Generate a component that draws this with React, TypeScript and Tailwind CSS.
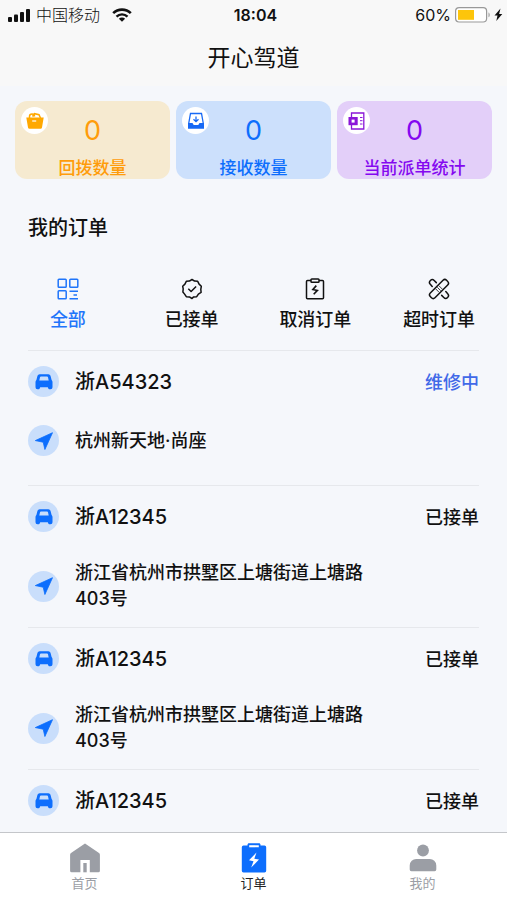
import type React from "react"
import { useState } from "react"

interface Stat {
  label: string
  value: number
  className: string
  icon: React.ReactNode
}

interface Order {
  id: number
  plate: string
  status: string
  repairing?: boolean
  address?: string
}

const SignalIcon = () => (
  <svg viewBox="0 0 24 14" className="w-6 h-[14px]" fill="#111">
    <rect x="0" y="9" width="4" height="5" rx="1" />
    <rect x="6" y="6.500" width="4" height="7.500" rx="1" />
    <rect x="12" y="4" width="4" height="10" rx="1" />
    <rect x="18" y="1" width="4" height="13" rx="1" />
  </svg>
)

const WifiIcon = () => (
  <svg viewBox="0 0 20 14" className="w-5 h-[14px]" fill="none" stroke="#111">
    <path d="M1.200 5.200a12.500 12.500 0 0 1 17.600 0" strokeWidth="2.600" />
    <path d="M4.500 8.600a7.800 7.800 0 0 1 11 0" strokeWidth="2.400" />
    <path d="M10 13.800 6.900 10.800a4.400 4.400 0 0 1 6.200 0z" fill="#111" stroke="none" />
  </svg>
)

const BatteryIcon = () => (
  <svg viewBox="0 0 48 16" className="w-12 h-4">
    <rect x="0.600" y="0.600" width="31" height="14.400" rx="3.500" fill="#fff" stroke="#999" strokeWidth="1.200" />
    <rect x="3" y="3" width="16" height="9.800" fill="#fdc50b" />
    <path d="M33.500 5.500c1.600.6 1.600 4.200 0 4.800z" fill="#999" />
    <path d="M45.500 1.500 39.500 8.600h3L41.300 14l6-7h-3.200z" fill="#111" />
  </svg>
)

const BasketIcon = () => (
  <svg viewBox="0 0 18 18" className="w-[18px] h-[18px]">
    <path d="M3.500 6V4.500a2.500 2.500 0 0 1 5 0M6.500 4.500l2-2.800 4.500 1 1.500 3.300" fill="none" stroke="#ffa800" strokeWidth="1.500" />
    <path d="M0.300 5.500h17.400l-1.700 10a1.500 1.500 0 0 1-1.500 1.200h-11a1.500 1.500 0 0 1-1.500-1.200z" fill="#ffa800" />
    <path d="M6.200 9h4" stroke="#fff" strokeWidth="1.200" />
  </svg>
)

const InboxIcon = () => (
  <svg viewBox="0 0 18 18" className="w-[18px] h-[18px]" fill="none" stroke="#1769f5" strokeWidth="1.300">
    <path d="M1.700 11.500 3.500 1.500h11l1.800 10" />
    <path d="M1 11h4.500l1.200 2h4.600l1.200-2H17v5.800H1z" fill="#1769f5" stroke="none" />
    <path d="M9 4.500v5M6.500 7.300 9 9.700l2.500-2.400" />
  </svg>
)

const ReportIcon = () => (
  <svg viewBox="0 0 18 18" className="w-[18px] h-[18px]" fill="none" stroke="#8a16d8" strokeWidth="1.300">
    <path d="M3.500 5V1h12.300v16H3.500v-4" />
    <path d="M12 5.500h2.500M12 8.700h2.500M12 12h2.500" strokeWidth="1" />
    <rect x="0.500" y="5" width="9.200" height="8.200" fill="#8a16d8" stroke="none" />
    <rect x="3.600" y="7.600" width="3" height="3" fill="#fff" stroke="none" />
  </svg>
)

const GridIcon = () => (
  <svg viewBox="0 0 22 22" className="w-[22px] h-[22px]" fill="none" stroke="currentColor" strokeWidth="1.500">
    <rect x="1.200" y="1.200" width="8" height="8" rx="0.800" />
    <rect x="12.800" y="1.200" width="8" height="8" rx="0.800" />
    <rect x="1.200" y="12.800" width="8" height="8" rx="0.800" />
    <path d="M12.500 13.200h8.500M16.500 17h3.500M12.500 20.700h8.500" />
  </svg>
)

const BadgeIcon = () => (
  <svg viewBox="0 0 22 22" className="w-[22px] h-[22px]" fill="none" stroke="currentColor" strokeWidth="1.500" strokeLinejoin="round">
    <path d="M11 1.500l2.600 1.600 3.100.2 1.400 2.800 2.200 2.200-.5 3 .3 3.100-2.700 1.700-1.700 2.600-3.100.2L11 20.500l-2.600-1.600-3.100-.2-1.700-2.600L1.900 14l.3-3.100-.5-2.600 2.200-2.200 1.400-2.800 3.100-.2z" />
    <path d="M7.300 10.800l2.800 2.700 5-5" />
  </svg>
)

const ClipboardIcon = () => (
  <svg viewBox="0 0 22 22" className="w-[22px] h-[22px]" fill="none" stroke="currentColor" strokeWidth="1.500">
    <path d="M7 2.500H3.500a1 1 0 0 0-1 1v16.300a1 1 0 0 0 1 1h15a1 1 0 0 0 1-1V3.500a1 1 0 0 0-1-1H15" />
    <rect x="7" y="1" width="8" height="3.300" rx="0.800" />
    <path d="M12.300 7.600 8.900 11.500l4.500.9-3.700 3.900" strokeWidth="1.600" />
  </svg>
)

const BandageIcon = () => (
  <svg viewBox="0 0 22 22" className="w-[22px] h-[22px]" fill="none" stroke="currentColor" strokeWidth="1.500" strokeLinecap="round">
    <rect x="-0.500" y="7.700" width="23" height="6.600" rx="2.500" transform="rotate(-45 11 11)" />
    <path d="M4.200 8.400 2.300 6.300a2.700 2.700 0 0 1 .1-3.800 2.700 2.700 0 0 1 3.800 0L8.300 4.600" />
    <path d="M17.800 13.600l1.900 2.100a2.700 2.700 0 0 1-.1 3.800 2.700 2.700 0 0 1-3.800 0l-2.100-2.100" />
    <path d="M8 11.200l2.800 2.800M9.600 9.600l2.800 2.800M11.200 8l2.800 2.800" strokeWidth="0.800" />
  </svg>
)

const CarIcon = () => (
  <svg viewBox="0 0 18 16" className="w-[18px] h-4">
    <path
      d="M4.600.2h8.800a2.200 2.200 0 0 1 2.100 1.600L16.600 6c.6.500.9 1.200.9 2v5.300a2 2 0 0 1-2 2h-.7c-.9 0-1.500-.6-1.700-1.400l-.3-.7H5.200l-.3.7c-.2.800-.8 1.400-1.700 1.400h-.7a2 2 0 0 1-2-2V8c0-.8.300-1.500.9-2l1.100-4.200A2.200 2.200 0 0 1 4.600.2z"
      fill="#0d6efd"
    />
    <path d="M6 2.500h6a1 1 0 0 1 1 .8l.7 3.300H4.300L5 3.300a1 1 0 0 1 1-.8z" fill="#c9defb" />
  </svg>
)

const ArrowIcon = () => (
  <svg viewBox="0 0 18 18" className="w-[18px] h-[18px]">
    <path d="M17.500.7 0.300 8.600l7.900 1.600 1.700 7.300z" fill="#0d6efd" stroke="#0d6efd" strokeWidth="0.800" strokeLinejoin="round" />
  </svg>
)

const HomeIcon = () => (
  <svg viewBox="0 0 30 30" className="w-[30px] h-[30px]" fill="currentColor">
    <path d="M15 .5 29 10c.6.400.9 1 .9 1.700v16.100a1.500 1.500 0 0 1-1.500 1.500h-8.600V17h-9.400v12.300H1.600A1.500 1.500 0 0 1 .1 27.800V11.700c0-.7.300-1.300.9-1.700z" />
    <path d="M13.300 20h3.400v9.300h-3.400z" />
  </svg>
)

const OrderIcon = () => (
  <svg viewBox="0 0 30 30" className="w-[30px] h-[30px]">
    <path d="M4.500 2.500h4V1.800C8.500.9 9.200.3 10 .3h10c.8 0 1.500.6 1.500 1.500v.7h4A1.700 1.700 0 0 1 27.200 4.200v23.500a1.700 1.700 0 0 1-1.700 1.700h-21a1.700 1.700 0 0 1-1.700-1.700V4.200A1.700 1.700 0 0 1 4.500 2.500z" fill="#0d6efd" />
    <path d="M10.200 2.200h9.600v2.100h-9.600z" fill="#fff" />
    <path d="M17.500 9.500 10 17.200l4.500 1-2.300 6.300 7.800-7.900-4.700-.9z" fill="#fff" />
  </svg>
)

const UserIcon = () => (
  <svg viewBox="0 0 30 30" className="w-[30px] h-[30px]" fill="currentColor">
    <circle cx="15" cy="7.500" r="5.900" />
    <path d="M8.500 16h13a6.500 6.500 0 0 1 6.800 6.500v4a1.700 1.700 0 0 1-1.700 1.700H3.400a1.700 1.700 0 0 1-1.700-1.700v-4A6.500 6.500 0 0 1 8.500 16z" />
  </svg>
)

const stats: Stat[] = [
  { label: "回拨数量", value: 0, className: "bg-[#f6ead0] text-[#ff9c0a]", icon: <BasketIcon /> },
  { label: "接收数量", value: 0, className: "bg-[#cce0fc] text-[#0d6efd]", icon: <InboxIcon /> },
  { label: "当前派单统计", value: 0, className: "bg-[#e3cff9] text-[#8408f0]", icon: <ReportIcon /> },
]

const tabs = [
  { label: "全部", icon: <GridIcon /> },
  { label: "已接单", icon: <BadgeIcon /> },
  { label: "取消订单", icon: <ClipboardIcon /> },
  { label: "超时订单", icon: <BandageIcon /> },
]

const orders: Order[] = [
  { id: 1, plate: "浙A54323", status: "维修中", repairing: true, address: "杭州新天地·尚座" },
  { id: 2, plate: "浙A12345", status: "已接单", address: "浙江省杭州市拱墅区上塘街道上塘路403号" },
  { id: 3, plate: "浙A12345", status: "已接单", address: "浙江省杭州市拱墅区上塘街道上塘路403号" },
  { id: 4, plate: "浙A12345", status: "已接单" },
]

const navItems = [
  { label: "首页", icon: <HomeIcon />, active: false },
  { label: "订单", icon: <OrderIcon />, active: true },
  { label: "我的", icon: <UserIcon />, active: false },
]

const RoundIcon = ({ children }: { children: React.ReactNode }) => (
  <span className="w-[31px] h-[31px] shrink-0 rounded-full bg-[#c9defb] flex items-center justify-center">
    {children}
  </span>
)

const OrderItem = ({ order }: { order: Order }) => (
  <li className="min-h-[135px] border-t border-[#e6e8ec] pt-[15px] pb-[15px] flex flex-col gap-7">
    <div className="flex items-center gap-4">
      <RoundIcon>
        <CarIcon />
      </RoundIcon>
      <span className="flex-1 pt-[2px] text-[20px] leading-[29px]">{order.plate}</span>
      <span className={`pt-[2px] text-[18px] leading-[29px] ${order.repairing ? "text-[#4169e8]" : ""}`}>
        {order.status}
      </span>
    </div>
    {order.address && (
      <div className="flex items-center gap-4 pr-[100px]">
        <RoundIcon>
          <ArrowIcon />
        </RoundIcon>
        <p className="text-[18px] leading-[26px]">{order.address}</p>
      </div>
    )}
  </li>
)

const App: React.FC = () => {
  const [activeTab, setActiveTab] = useState("全部")

  return (
    <div
      lang="zh-CN"
      className="h-screen flex flex-col bg-[#f5f7fb] text-[#111] font-medium font-[Inter,'Noto_Sans_CJK_SC',sans-serif]"
    >
      <header className="bg-[#f8f8f8]">
        <div className="h-[30px] pl-2 pr-1 grid grid-cols-[1fr_auto_1fr] items-center">
          <div className="flex items-center gap-1">
            <SignalIcon />
            <span className="text-[16px] leading-5 font-light">中国移动</span>
            <span className="ml-2">
              <WifiIcon />
            </span>
          </div>
          <span className="text-[16px] leading-5 font-semibold">18:04</span>
          <div className="flex items-center justify-end gap-1">
            <span className="text-[16px] leading-5 font-normal">60%</span>
            <BatteryIcon />
          </div>
        </div>
        <h1 className="text-center text-[23px] leading-[56px] font-normal">开心驾道</h1>
      </header>

      <main className="flex-1 min-h-0 overflow-y-auto [scrollbar-width:none] pt-[15px]">
        <section className="grid grid-cols-3 gap-[6px] px-[15px]">
          {stats.map((stat) => (
            <div key={stat.label} className={`relative h-[78px] rounded-xl pt-3 text-center ${stat.className}`}>
              <span className="absolute left-[6px] top-[6px] w-[27px] h-[27px] rounded-full bg-white flex items-center justify-center">
                {stat.icon}
              </span>
              <div className="text-[27px] leading-9 font-normal">{stat.value}</div>
              <div className="mt-2 text-[17px] leading-[22px]">{stat.label}</div>
            </div>
          ))}
        </section>

        <h2 className="mt-[35px] px-7 text-[20px] leading-7">我的订单</h2>

        <div className="mt-9 px-[6px] pb-[18px] grid grid-cols-4">
          {tabs.map((tab) => (
            <button
              key={tab.label}
              type="button"
              onClick={() => setActiveTab(tab.label)}
              className={`flex flex-col items-center gap-2 text-[18px] leading-6 ${
                activeTab === tab.label ? "text-[#1f75fa]" : "text-[#111]"
              }`}
            >
              {tab.icon}
              {tab.label}
            </button>
          ))}
        </div>

        <ul className="px-7">
          {orders.map((order) => (
            <OrderItem key={order.id} order={order} />
          ))}
        </ul>
      </main>

      <nav className="h-[68px] shrink-0 grid grid-cols-3 bg-white border-t border-[#c4c6ca]">
        {navItems.map((item) => (
          <a
            key={item.label}
            href="#"
            className={`flex flex-col items-center pt-[10px] text-[13px] leading-5 font-normal ${
              item.active ? "text-[#222]" : "text-[#9b9ea5]"
            }`}
          >
            {item.icon}
            {item.label}
          </a>
        ))}
      </nav>
    </div>
  )
}

export default App
